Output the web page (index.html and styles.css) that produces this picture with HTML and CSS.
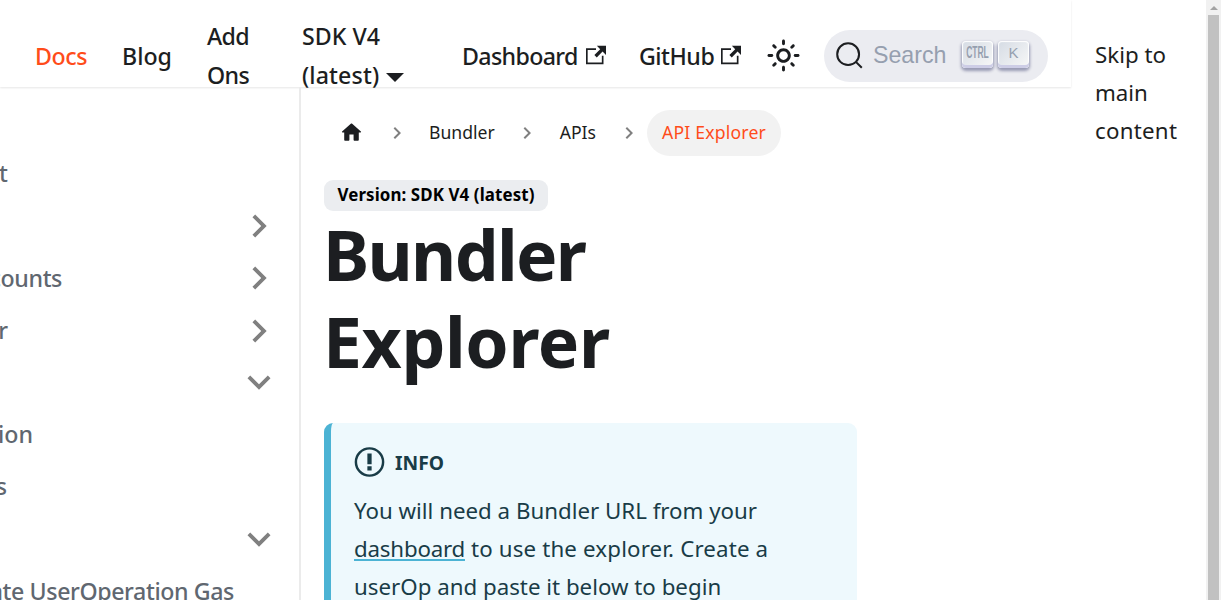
FILE: index.html
```
<!DOCTYPE html>
<html lang="en">
<head>
<meta charset="utf-8">
<title>Bundler Explorer</title>
<link rel="stylesheet" href="styles.css">
</head>
<body>
<svg width="0" height="0" class="defs">
  <symbol id="chev" viewBox="0 0 24 24"><path d="M7.41 15.41L12 10.83l4.59 4.58L18 14l-6-6-6 6z"/></symbol>
  <symbol id="ext" viewBox="0 0 24 24"><path d="M21 13v10h-21v-19h12v2h-10v15h17v-8h2zm3-12h-10.988l4.035 4-6.977 7.07 2.828 2.828 6.977-7.07 4.125 4.172v-11z"/></symbol>
</svg>
<div class="page">
  <div class="site">
    <header class="navbar">
      <a class="nav-link active">Docs</a>
      <a class="nav-link n-blog">Blog</a>
      <a class="nav-link two n-add">Add<br>Ons</a>
      <a class="nav-link two">SDK V4<br><span class="n-latest">(latest)</span><i class="caret"></i></a>
      <a class="nav-link n-dash"><span>Dashboard</span><svg class="ext"><use href="#ext"/></svg></a>
      <a class="nav-link n-git"><span>GitHub</span><svg class="ext"><use href="#ext"/></svg></a>
      <svg class="sun" viewBox="0 0 24 24"><path d="M12,9c1.65,0,3,1.35,3,3s-1.35,3-3,3s-3-1.35-3-3S10.35,9,12,9 M12,7c-2.76,0-5,2.24-5,5s2.24,5,5,5s5-2.24,5-5 S14.76,7,12,7L12,7z M2,13l2,0c0.55,0,1-0.45,1-1s-0.45-1-1-1l-2,0c-0.55,0-1,0.45-1,1S1.45,13,2,13z M20,13l2,0c0.55,0,1-0.45,1-1 s-0.45-1-1-1l-2,0c-0.55,0-1,0.45-1,1S19.45,13,20,13z M11,2v2c0,0.55,0.45,1,1,1s1-0.45,1-1V2c0-0.55-0.45-1-1-1S11,1.45,11,2z M11,20v2c0,0.55,0.45,1,1,1s1-0.45,1-1v-2c0-0.55-0.45-1-1-1C11.45,19,11,19.45,11,20z M5.99,4.58c-0.39-0.39-1.03-0.39-1.41,0 c-0.39,0.39-0.39,1.03,0,1.41l1.06,1.06c0.39,0.39,1.03,0.39,1.41,0s0.39-1.03,0-1.41L5.99,4.58z M18.36,16.95 c-0.39-0.39-1.03-0.39-1.41,0c-0.39,0.39-0.39,1.03,0,1.41l1.06,1.06c0.39,0.39,1.03,0.39,1.41,0c0.39-0.39,0.39-1.03,0-1.41 L18.36,16.95z M19.42,5.99c0.39-0.39,0.39-1.03,0-1.41c-0.39-0.39-1.03-0.39-1.41,0l-1.06,1.06c-0.39,0.39-0.39,1.03,0,1.41 s1.03,0.39,1.41,0L19.42,5.99z M7.05,18.36c0.39-0.39,0.39-1.03,0-1.41c-0.39-0.39-1.03-0.39-1.41,0l-1.06,1.06 c-0.39,0.39-0.39,1.03,0,1.41s1.03,0.39,1.41,0L7.05,18.36z"/></svg>
      <button class="search">
        <svg class="glass" viewBox="0 0 20 20"><path d="M14.386 14.386l4.0877 4.0877-4.0877-4.0877c-2.9418 2.9419-7.7115 2.9419-10.6533 0-2.9419-2.9418-2.9419-7.7115 0-10.6533 2.9418-2.9419 7.7115-2.9419 10.6533 0 2.9419 2.9418 2.9419 7.7115 0 10.6533z"/></svg>
        <span class="search-text">Search</span>
        <kbd><span class="ctrl">CTRL</span></kbd><kbd>K</kbd>
      </button>
    </header>
    <div class="content">
      <aside class="sidebar">
        <div class="row"><span class="label r-t">t</span></div>
        <div class="row"><svg class="chev right"><use href="#chev"/></svg></div>
        <div class="row"><span class="label r-counts">counts</span><svg class="chev right"><use href="#chev"/></svg></div>
        <div class="row"><span class="label r-r">r</span><svg class="chev right"><use href="#chev"/></svg></div>
        <div class="row"><svg class="chev down"><use href="#chev"/></svg></div>
        <div class="row"><span class="label r-ion">ion</span></div>
        <div class="row"><span class="label r-s">s</span></div>
        <div class="row"><svg class="chev down"><use href="#chev"/></svg></div>
        <div class="row"><span class="label r-gas">ate UserOperation Gas</span></div>
      </aside>
      <main class="doc">
        <nav class="crumbs">
          <svg class="home" viewBox="0 0 24 24"><path d="M10 19v-5h4v5c0 .55.45 1 1 1h3c.55 0 1-.45 1-1v-7h1.700c.46 0 .68-.57.33-.87L12.670 3.600c-.38-.34-.96-.34-1.340 0l-8.360 7.530c-.34.3-.13.87.33.87H5v7c0 .55.45 1 1 1h3c.55 0 1-.45 1-1z"/></svg>
          <svg class="sep"><use href="#chev"/></svg>
          <a class="crumb">Bundler</a>
          <svg class="sep"><use href="#chev"/></svg>
          <a class="crumb">APIs</a>
          <svg class="sep"><use href="#chev"/></svg>
          <a class="current">API Explorer</a>
        </nav>
        <span class="badge">Version: SDK V4 (latest)</span>
        <h1><span class="h-b">Bundler</span><br><span class="h-e">Explorer</span></h1>
        <section class="info">
          <div class="info-head">
            <svg viewBox="0 0 14 16"><circle cx="7" cy="8" r="6.400"/><path d="M6 4h2v5H6zM6 10h2v2H6z"/></svg>
            <span>INFO</span>
          </div>
          <p>You will need a Bundler URL from your<br><a>dashboard</a><span class="p2"> to use the explorer. Create a</span><br>userOp and paste it below to begin</p>
        </section>
      </main>
    </div>
  </div>
  <a class="skip">Skip to<br>main<br><span class="s3">content</span></a>
  <div class="scrollbar"><i class="up"></i><i class="thumb"></i></div>
</div>
</body>
</html>
```
FILE: styles.css
```
* { box-sizing: border-box; }
body { margin: 0; height: 600px; overflow: hidden; background: #fff; color: #1c1e21; font: 22.3px/38px "Noto Sans", sans-serif; }
.defs { position: absolute; }
.page { display: grid; grid-template-columns: 1071px 135px 15px; height: 600px; overflow: hidden; }
.site { display: flex; flex-direction: column; height: 600px; min-width: 0; }
.navbar { flex: none; height: 87px; display: grid; grid-template-columns: 87px 85px 95px 160px 177px 128px 57px 224px; padding: 25px 0 0 35px; align-items: start; box-shadow: 0 1px 2px rgba(0,0,0,.1); }
.nav-link { font-size: 23.2px; font-weight: 500; line-height: 39px; margin-top: 12px; display: flex; align-items: center; white-space: nowrap; letter-spacing: -.4px; }
.nav-link.two { display: block; margin-top: -8px; letter-spacing: 0; }
.nav-link.n-blog { letter-spacing: 0; }
.nav-link.n-add { letter-spacing: -.6px; }
.nav-link.n-dash { letter-spacing: -.65px; }
.nav-link.n-git { letter-spacing: -.5px; }
.n-latest { letter-spacing: .12px; }
.active { color: #ff4c1a; }
.caret { display: inline-block; border: 9px solid transparent; border-top-color: #1c1e21; border-bottom-width: 0; margin-left: 7px; vertical-align: 2px; }
.ext { width: 20px; height: 20px; margin: 0 0 3px 8px; fill: #1c1e21; }
.n-git .ext { margin-left: 7px; }
.sun { width: 35px; height: 35px; margin: 13px 0 0 -1px; fill: #1c1e21; }
.search { width: 224px; height: 52px; margin-top: 5px; border: 0; border-radius: 26px; background: #ebecf1; padding: 0 19px 0 11px; display: flex; align-items: center; font: 23.2px "Liberation Sans", sans-serif; color: #969faf; }
.glass { width: 29px; height: 29px; margin-bottom: 1px; fill: none; stroke: #1c1e21; stroke-width: 1.4; overflow: visible; }
.search-text { margin: 0 auto 1px 9px; }
kbd { width: 31px; height: 27px; margin: 0 0 4px 5px; border-radius: 4px; background: linear-gradient(-225deg, #d5dbe4, #f8f8f8); box-shadow: inset 0 -3px 0 #cdcde6, inset 0 0 1px 1px #fff, 0 2px 3px 1px rgba(30,35,90,.4); font: 15px/24px "Liberation Sans", sans-serif; color: #969faf; text-align: center; }
.ctrl { display: block; font-size: 16px; font-weight: bold; transform: scaleX(.53); margin: 0 -8px; }
.content { display: flex; flex: 1; min-height: 0; }
.sidebar { width: 301px; border-right: 2px solid #ebebeb; padding-top: 60px; overflow: hidden; color: #606770; }
.row { height: 52.2px; display: flex; align-items: center; width: 299px; }
.label { flex: none; display: flex; justify-content: flex-end; white-space: nowrap; font-weight: 500; font-size: 23.2px; }
.r-t, .r-r { width: 8px; }
.r-counts { width: 62px; letter-spacing: -.4px; padding-top: 1px; }
.r-ion { width: 33px; }
.r-s { width: 7px; }
.r-gas { width: 234px; letter-spacing: -.4px; }
.chev { width: 46px; height: 46px; margin-left: auto; margin-right: 17px; fill: #808080; }
.right { transform: rotate(90deg); margin-top: 2px; }
.down { transform: rotate(180deg); margin-top: 1px; }
.doc { width: 557px; padding: 23px 0 0 23px; }
.crumbs { height: 46px; display: flex; align-items: center; font-size: 17.6px; margin-left: -1px; }
.home { width: 25px; height: 25px; margin: 0 0 2px 16px; fill: #1c1e21; }
.sep { width: 24px; height: 24px; fill: #808080; transform: rotate(90deg); margin: 0 20.5px; }
.crumb { margin-bottom: 2px; }
.current { width: 134px; height: 46px; line-height: 45px; border-radius: 23px; background: #f2f2f2; color: #ff4c1a; text-align: center; white-space: nowrap; margin-left: -14px; letter-spacing: .2px; }
.badge { display: block; width: 224px; height: 31px; margin-top: 24px; border-radius: 9px; background: #ebedf0; color: #000; font-size: 16.9px; letter-spacing: .1px; font-weight: 700; line-height: 30px; text-align: center; white-space: nowrap; }
h1 { margin: 0 0 0 -1px; font-size: 69.6px; line-height: 87px; font-weight: 700; white-space: nowrap; }
.h-b { letter-spacing: -1.7px; }
.h-e { letter-spacing: -.4px; }
.info { width: 533px; height: 260px; margin-top: 38px; border-left: 7px solid #4cb3d4; border-radius: 9px; background: #eef9fd; color: #193c47; padding: 21px 0 0 23px; }
.info-head { display: flex; align-items: center; height: 36px; gap: 10px; font-size: 19.3px; font-weight: 700; }
.info-head svg { width: 31px; height: 34px; }
.info-head circle { fill: none; stroke: #193c47; stroke-width: 1.15; }
.info-head path { fill: #193c47; }
.info-head span { padding-top: 1px; }
p { margin: 12px 0 0; white-space: nowrap; }
p a { border-bottom: 2px solid #4cb3d4; display: inline-block; line-height: 20px; letter-spacing: -.2px; }
.p2 { letter-spacing: .15px; }
.s3 { letter-spacing: .25px; }
.skip { padding: 36px 0 0 24px; color: #1c1e21; }
.scrollbar { background: #f1f1f1; display: flex; flex-direction: column; align-items: center; }
.up { border: 4px solid transparent; border-bottom-color: #a3a3a3; border-top-width: 0; margin: 6px 0 5px; }
.thumb { width: 11px; flex: 1; background: #c1c1c1; }
```
